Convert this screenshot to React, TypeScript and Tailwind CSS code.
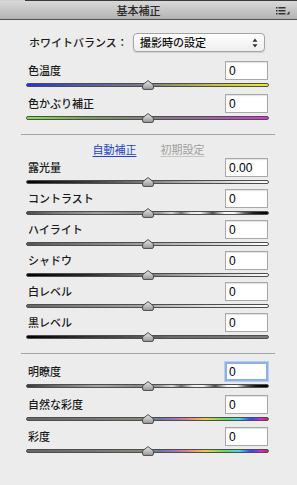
import React from "react";

const JP = "font-['Noto_Sans_CJK_JP',sans-serif]";

function Thumb() {
  return (
    <svg
      width="12"
      height="10"
      viewBox="0 0 12 10"
      className="absolute left-[116px] top-0"
    >
      <defs>
        <linearGradient id="tg" x1="0" y1="0" x2="0" y2="1">
          <stop offset="0" stopColor="#e6e6e6" />
          <stop offset="1" stopColor="#9a9a9a" />
        </linearGradient>
      </defs>
      <path
        d="M6 0.6 L11.4 4.8 L11.4 8 Q11.4 9.4 10 9.4 L2 9.4 Q0.6 9.4 0.6 8 L0.6 4.8 Z"
        fill="url(#tg)"
        stroke="#4a4a4a"
        strokeWidth="1"
      />
    </svg>
  );
}

function Slider({ track }: { track: string }) {
  return (
    <div className="relative h-[10px] ml-[26px] w-[243px]">
      <div
        className={`absolute left-0 right-0 top-[3px] h-[4px] rounded-full border border-[#4e4e4e] ${track}`}
      />
      <Thumb />
    </div>
  );
}

function Row({
  label,
  value,
  track,
  focused,
  className,
}: {
  label: string;
  value: string;
  track: string;
  focused?: boolean;
  className?: string;
}) {
  return (
    <div className={`flex flex-col ${className ?? ""}`}>
      <div className="flex items-center justify-between h-[19px] ml-[28px] w-[240px]">
        <span className={`${JP} text-[11px] leading-none font-medium text-[#1a1a1a]`}>{label}</span>
        {focused ? (
          <div className="w-[43px] h-[19px] bg-white border-2 border-[#8fb0e4] shadow-[0_0_0_1px_#b9cff0] flex items-center pl-[2px] font-['Liberation_Sans',sans-serif] text-[12px] text-black">
            {value}
          </div>
        ) : (
          <div className="w-[43px] h-[19px] bg-white border border-[#a8a8a8] shadow-[inset_0_1px_1px_rgba(0,0,0,0.12)] flex items-center pl-[3px] font-['Liberation_Sans',sans-serif] text-[12px] text-black">
            {value}
          </div>
        )}
      </div>
      <Slider track={track} />
    </div>
  );
}

export default function App() {
  return (
    <div className={`w-[297px] h-[485px] bg-[#ececec] overflow-hidden ${JP}`}>
      {/* header */}
      <div className="flex h-px">
        <div className="w-[25px] bg-[#cfcfcf]" />
        <div className="flex-1 bg-[#3a3a3a]" />
      </div>
      <div className="relative h-[19px] flex items-center justify-center pr-[20px] bg-[linear-gradient(to_bottom,#d9d9d9,#b3b3b3)] border-b border-[#505050]">
        <span className={`${JP} text-[11px] leading-none font-medium text-[#2a2a2a]`}>基本補正</span>
        <svg
          width="14"
          height="8"
          viewBox="0 0 14 8"
          className="absolute right-[7px] top-[6px]"
        >
          <rect x="0" y="0" width="1.5" height="1.5" fill="#333" />
          <rect x="2.5" y="0" width="7" height="1.5" fill="#333" />
          <rect x="0" y="3" width="1.5" height="1.5" fill="#333" />
          <rect x="2.5" y="3" width="7" height="1.5" fill="#333" />
          <rect x="0" y="6" width="1.5" height="1.5" fill="#333" />
          <rect x="2.5" y="6" width="7" height="1.5" fill="#333" />
          <path d="M13.5 4 L13.5 7.5 L10.5 7.5 Z" fill="#333" />
        </svg>
      </div>

      {/* white balance */}
      <div className="flex items-center mt-[13px] h-[19px] ml-[29px]">
        <span className="w-[104px] text-[11px] leading-none font-medium text-[#1a1a1a]">ホワイトバランス：</span>
        <div className="relative w-[132px] h-[19px] rounded-[4px] border border-[#a4a4a4] bg-[linear-gradient(to_bottom,#ffffff,#eeeeee)] shadow-[0_1px_1px_rgba(0,0,0,0.12)] flex items-center pl-[6px]">
          <span className="text-[11px] leading-none text-[#111] font-medium">撮影時の設定</span>
          <svg width="6" height="10" viewBox="0 0 6 10" className="absolute right-[6px] top-[4px]">
            <path d="M3 0.5 L5.5 3.8 L0.5 3.8 Z" fill="#333" />
            <path d="M3 9.5 L5.5 6.2 L0.5 6.2 Z" fill="#333" />
          </svg>
        </div>
      </div>

      <Row
        className="mt-[9px]"
        label="色温度"
        value="0"
        track="bg-[linear-gradient(to_right,#1c33e8,#4f58b0_22%,#7c7c84_48%,#8a8870_55%,#c8c240_78%,#f2ea28)]"
      />
      <Row
        className="mt-[4px]"
        label="色かぶり補正"
        value="0"
        track="bg-[linear-gradient(to_right,#84ea30,#7aa05c_25%,#808080_50%,#a064aa_75%,#e22ae8)]"
      />

      <div className="mt-[11px] ml-[21px] w-[254px] h-px bg-[#a3a3a3]" />

      <div className="mt-[7px] h-[14px] flex items-center justify-center gap-[24px]">
        <span className="text-[11px] leading-none text-[#2244c4] underline underline-offset-2">自動補正</span>
        <span className="text-[11px] leading-none text-[#a0a0a0] underline underline-offset-2 decoration-[#c4c4c4]">初期設定</span>
      </div>

      <Row
        className="mt-[2px]"
        label="露光量"
        value="0.00"
        track="bg-[linear-gradient(to_right,#000000,#3a3a3a_25%,#808080_50%,#c8c8c8_75%,#ffffff)]"
      />
      <Row
        className="mt-[2px]"
        label="コントラスト"
        value="0"
        track="bg-[linear-gradient(to_right,#4a4a4a,#7a7a7a_12%,#a0a0a0_30%,#8c8c8c_45%,#9a9a9a_55%,#d8d8d8_60%,#707070_64%,#e8e8e8_68%,#f0f0f0_72%,#505050_77%,#f4f4f4_82%,#f8f8f8_86%,#6a6a6a_90%,#1a1a1a_94%,#000000)]"
      />
      <Row
        className="mt-[2px]"
        label="ハイライト"
        value="0"
        track="bg-[linear-gradient(to_right,#555555,#8c8c8c_35%,#bdbdbd_65%,#ffffff)]"
      />
      <Row
        className="mt-[2px]"
        label="シャドウ"
        value="0"
        track="bg-[linear-gradient(to_right,#000000,#2a2a2a_25%,#7a7a7a_50%,#d0d0d0_80%,#ffffff)]"
      />
      <Row
        className="mt-[2px]"
        label="白レベル"
        value="0"
        track="bg-[linear-gradient(to_right,#666666,#a0a0a0_45%,#e0e0e0_75%,#ffffff)]"
      />
      <Row
        className="mt-[2px]"
        label="黒レベル"
        value="0"
        track="bg-[linear-gradient(to_right,#000000,#3c3c3c_30%,#6a6a6a_60%,#7c7c7c)]"
      />

      <div className="mt-[11px] ml-[21px] w-[254px] h-px bg-[#a3a3a3]" />

      <Row
        className="mt-[8px]"
        focused
        label="明瞭度"
        value="0"
        track="bg-[linear-gradient(to_right,#3a3a3a,#6e6e6e_12%,#a8a8a8_30%,#8a8a8a_45%,#9a9a9a_55%,#dedede_60%,#6a6a6a_64%,#eeeeee_69%,#f4f4f4_73%,#4a4a4a_78%,#f6f6f6_83%,#fafafa_87%,#5a5a5a_91%,#111111_95%,#000000)]"
      />
      <Row
        className="mt-[4px]"
        label="自然な彩度"
        value="0"
        track="bg-[linear-gradient(to_right,#666666,#747474_25%,#7e8676_42%,#7c8a70_50%,#6a78b0_56%,#b070c0_62%,#e88a80_68%,#e8d040_74%,#60e050_82%,#40d8e4_88%,#2a48ff_93%,#d424e4_97%,#e42040)]"
      />
      <Row
        className="mt-[3px]"
        label="彩度"
        value="0"
        track="bg-[linear-gradient(to_right,#666666,#747474_25%,#7e8676_42%,#7c8a70_50%,#6a78b0_56%,#b070c0_62%,#e88a80_68%,#e8d040_74%,#60e050_82%,#40d8e4_88%,#2a48ff_93%,#d424e4_97%,#e42040)]"
      />
    </div>
  );
}
